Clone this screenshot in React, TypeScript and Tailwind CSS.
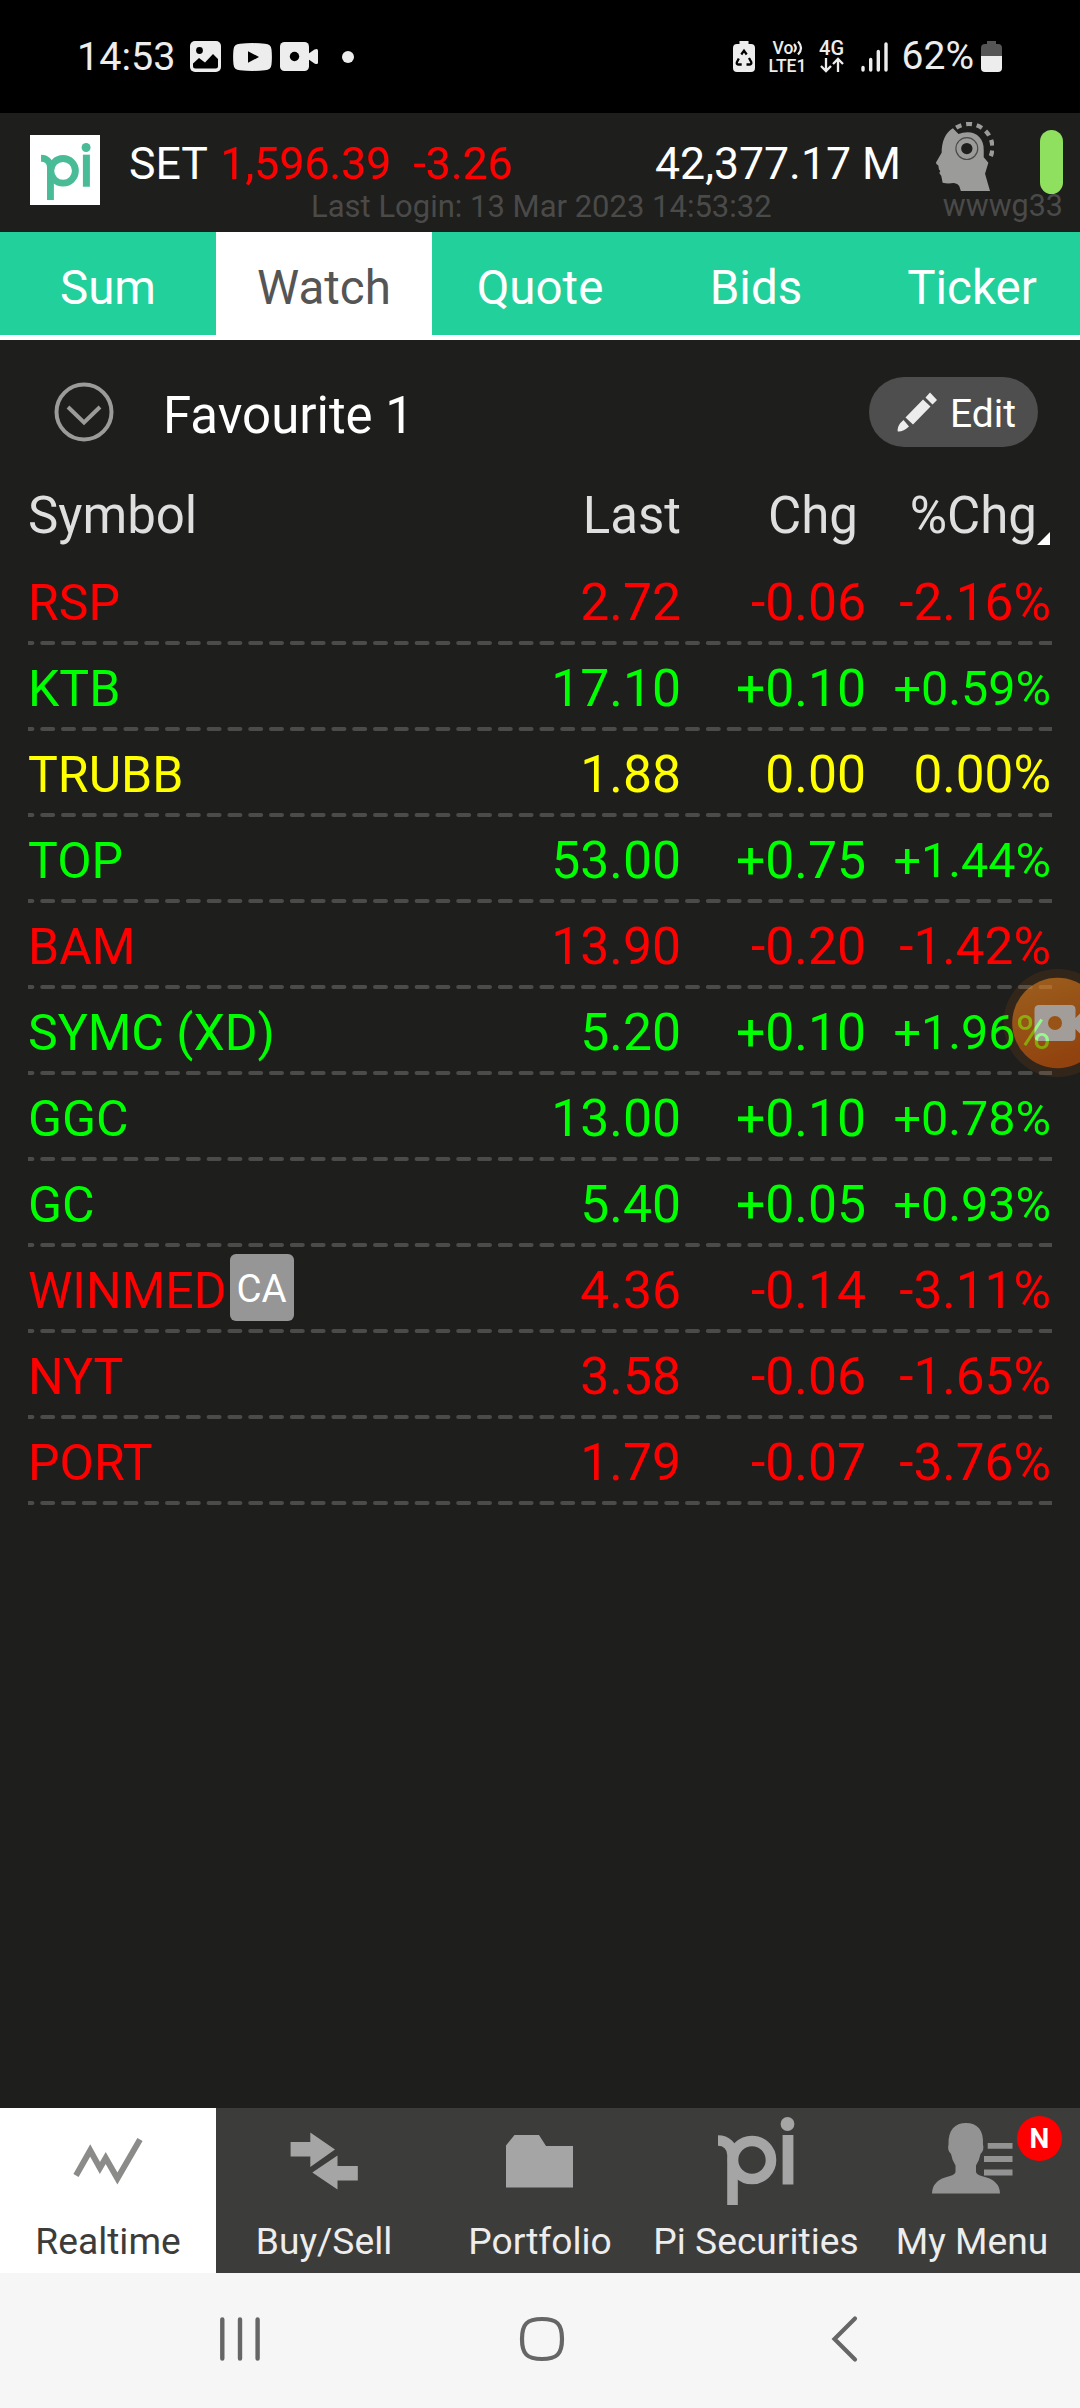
import React from "react";

type Trend = "up" | "down" | "flat";

interface Quote {
  symbol: string;
  last: string;
  chg: string;
  pct: string;
  trend: Trend;
  flag?: string;
}

const quotes: Quote[] = [
  { symbol: "RSP", last: "2.72", chg: "-0.06", pct: "-2.16%", trend: "down" },
  { symbol: "KTB", last: "17.10", chg: "+0.10", pct: "+0.59%", trend: "up" },
  { symbol: "TRUBB", last: "1.88", chg: "0.00", pct: "0.00%", trend: "flat" },
  { symbol: "TOP", last: "53.00", chg: "+0.75", pct: "+1.44%", trend: "up" },
  { symbol: "BAM", last: "13.90", chg: "-0.20", pct: "-1.42%", trend: "down" },
  { symbol: "SYMC (XD)", last: "5.20", chg: "+0.10", pct: "+1.96%", trend: "up" },
  { symbol: "GGC", last: "13.00", chg: "+0.10", pct: "+0.78%", trend: "up" },
  { symbol: "GC", last: "5.40", chg: "+0.05", pct: "+0.93%", trend: "up" },
  { symbol: "WINMED", last: "4.36", chg: "-0.14", pct: "-3.11%", trend: "down", flag: "CA" },
  { symbol: "NYT", last: "3.58", chg: "-0.06", pct: "-1.65%", trend: "down" },
  { symbol: "PORT", last: "1.79", chg: "-0.07", pct: "-3.76%", trend: "down" },
];

const trendColor: Record<Trend, string> = {
  up: "text-[#00ff00]",
  down: "text-[#ff0000]",
  flat: "text-[#ffff00]",
};

const tabs = ["Sum", "Watch", "Quote", "Bids", "Ticker"];

const PiLogo: React.FC<{ className: string }> = ({ className }) => (
  <svg viewBox="0 0 77 88" fill="none" stroke="currentColor" className={className}>
    <circle cx="34" cy="43" r="19" strokeWidth="10.6" />
    <path d="M0 23.5C8 23.5 14.5 29 14.5 38V88" strokeWidth="10.6" />
    <path d="M70 18V67.5" strokeWidth="10.8" />
    <circle cx="69.5" cy="7" r="6.9" fill="currentColor" stroke="none" />
  </svg>
);

const StatusBar: React.FC = () => (
  <div className="h-[113px] bg-black text-[#ededed] flex items-center justify-between pl-[77px] pr-[78px]">
    <div className="flex items-center">
      <span className="text-[39.5px] leading-none w-[113px]">14:53</span>
      {/* Notification icons */}
      <svg viewBox="0 0 31 31" className="w-[31px] h-[31px]">
        <rect width="31" height="31" rx="5" fill="#ededed" />
        <circle cx="9.5" cy="9.5" r="3.4" fill="#000" />
        <path d="M3 22.5L9 17l6 4.500L23 13l5 5v7q0 2.500-2.500 2.500h-20Q3 27.500 3 25z" fill="#000" />
      </svg>
      <svg viewBox="0 0 39 28" className="w-[39px] h-[28px] ml-3">
        <path d="M7 .8Q19.500-.6 32 .8q6 .2 6.500 5.700.8 7.500 0 15-.5 5.500-6.500 5.700-12.500 1.400-25 0-6-.2-6.500-5.700-.8-7.500 0-15Q1 1 7 .8z" fill="#ededed" />
        <path d="M15 8.200v11.600L26 14z" fill="#000" />
      </svg>
      <svg viewBox="0 0 38 29" className="w-[38px] h-[29px] ml-2">
        <rect width="29" height="29" rx="4.500" fill="#ededed" />
        <path d="M28 12l6.500-4.500q3.500-1.500 3.500 1v12q0 2.500-3.500 1L28 17z" fill="#ededed" />
        <circle cx="14.500" cy="14.500" r="4.700" fill="#000" />
      </svg>
      <span className="w-3 h-3 rounded-full bg-[#ededed] ml-6" />
    </div>

    <div className="flex items-center">
      <svg viewBox="0 0 22 31" className="w-[22px] h-[31px]">
        <path d="M6.500 0h9v3H18q4 0 4 4v20q0 4-4 4H4q-4 0-4-4V7q0-4 4-4h2.500z" fill="#ededed" />
        <path d="M8.300 13.500L11 9.700l2.700 3.800M16 17l2.200 4q.8 2.200-1.500 2.500h-3.200M8.700 23.500H5.300Q3 23.200 4 21l1.800-3.500" fill="none" stroke="#000" strokeWidth="2.300" />
      </svg>
      <div className="flex flex-col gap-[2px] ml-[14px] w-[38px] text-[17.5px] leading-[16px] font-medium">
        <span className="flex items-center pl-[4px]">
          Vo
          <svg viewBox="0 0 11 16" className="w-[11px] h-[16px]" fill="none" stroke="currentColor" strokeWidth="2.200">
            <path d="M1 4q3.500 4 0 8M5 1.500q6 6.500 0 13" />
          </svg>
        </span>
        <span>LTE1</span>
      </div>
      <div className="flex flex-col items-center ml-[12px] w-[26px]">
        <span className="text-[20px] leading-[16px] font-medium">4G</span>
        <svg viewBox="0 0 24 16" className="w-[24px] h-[16px] mt-[1px]" fill="none" stroke="currentColor" strokeWidth="2.300">
          <path d="M6 1v13M1 9l5 5 5-5M18 15V2M13 7l5-5 5 5" />
        </svg>
      </div>
      <svg viewBox="0 0 27 30" className="w-[27px] h-[30px] ml-[16px]" fill="none" stroke="currentColor" strokeWidth="3.400" strokeLinecap="round">
        <path d="M2 25.500V28M9.700 17.500V28M17.300 9.500V28M25 2V28" />
      </svg>
      <span className="text-[39px] leading-none ml-[14px]">62%</span>
      <svg viewBox="0 0 21 31" className="w-[21px] h-[31px] ml-[7px]">
        <path d="M6 0h9v3h2q4 0 4 4v9H0V7q0-4 4-4h2z" fill="#555" />
        <path d="M0 15h21v12q0 4-4 4H4q-4 0-4-4z" fill="#ededed" />
      </svg>
    </div>
  </div>
);

const MarketHeader: React.FC = () => (
  <header className="h-[119px] flex pl-[30px]">
    <div className="w-[70px] h-[70px] mt-[22px] bg-white shrink-0 pt-[8px] pl-[11px]">
      <PiLogo className="w-[50px] h-[57px] text-[#49bb97]" />
    </div>
    <div className="flex-1 flex flex-col pl-[29px] pr-[17px]">
      <div className="flex items-start h-[81px] text-[44.6px] leading-none text-white whitespace-pre">
        <span className="mt-[29px] w-[91px]">SET</span>
        <span className="mt-[29px] text-[#ff0000] flex-1">1,596.39  -3.26</span>
        <span className="mt-[29px]">42,377.17 M</span>
        <svg viewBox="0 0 178 212" className="w-[59px] h-[71px] mt-[9px] ml-[34px]">
          <path
            d="M54 18C32 30 20 58 20 92L3 121q-1 5 7 9l2 12 4 5-3 6 6 9 4 20q14 4 34 1 12 2 16 9l5 15h88l-15-52 10-33-14-17V83C148 52 128 30 98 30q-15 0-27 5z"
            fill="#9b9b99"
          />
          <circle cx="96" cy="79" r="33" fill="none" stroke="#4a4a48" strokeWidth="3.500" />
          <circle cx="96" cy="79" r="17" fill="#1e1e1c" />
          <path d="M64 16A71 71 0 0 1 165 109" fill="none" stroke="#9b9b99" strokeWidth="13" strokeDasharray="17.500 14.500" />
        </svg>
        <span className="w-[23px] h-[64px] rounded-full bg-[#8fe05f] mt-[17px] ml-[46px]" />
      </div>
      <div className="flex items-center justify-between h-[25px] pl-[182px] text-[31px] leading-none text-[#4a4a49]">
        <span>Last Login: 13 Mar 2023 14:53:32</span>
        <span className="text-[30.5px]">wwwg33</span>
      </div>
    </div>
  </header>
);

const TabBar: React.FC = () => (
  <nav className="flex h-[108px] bg-[#22d09b] border-b-[5px] border-white text-[47.5px] leading-none">
    {tabs.map((tab) => (
      <div
        key={tab}
        className={`flex-1 flex items-center justify-center pt-[11px] ${
          tab === "Watch" ? "bg-white text-[#555]" : "text-white"
        }`}
      >
        {tab}
      </div>
    ))}
  </nav>
);

const FavouriteRow: React.FC = () => (
  <div className="flex items-center h-[144px] pl-[54px] pr-[42px] text-white">
    <svg viewBox="0 0 60 60" className="w-[60px] h-[60px]" fill="none" stroke="#9b9b99">
      <circle cx="30" cy="30" r="27.500" strokeWidth="4" />
      <path d="M14 25l16 15.500L46 25" strokeWidth="4" />
    </svg>
    <span className="flex-1 ml-[49px] mt-[6px] text-[51px] leading-none">Favourite 1</span>
    <button className="w-[169px] h-[70px] rounded-full bg-[#4e4e4e] flex items-center pl-[28px]">
      <svg viewBox="0 0 40 40" className="w-[40px] h-[40px]" fill="#ededed">
        <path d="M28.500 5.500l4.500-5 7 7.500-4.500 4.500zM26 7.500l7.500 7L16 32.500l-7.500-7zM6.500 28l5.500 6.500Q6 40 .8 39.500-.5 34 6.500 28z" />
      </svg>
      <span className="text-[39px] leading-none ml-[13px] mt-[4px]">Edit</span>
    </button>
  </div>
);

const DashedRule: React.FC = () => (
  <svg viewBox="0 0 1024 6" className="w-full h-[6px]" fill="none">
    <path
      d="M-6.500 3H1024"
      stroke="#4b4b4a"
      strokeWidth="4.200"
      strokeLinecap="round"
      strokeDasharray="10.800 10"
    />
  </svg>
);

const QuoteTable: React.FC = () => (
  <div className="px-[28px]">
    <div className="flex h-[76px] pb-[14px] items-center text-[51px] leading-none text-[#dfdfdf] relative">
      <span className="flex-1">Symbol</span>
      <span className="text-right">Last</span>
      <span className="w-[177px] text-right">Chg</span>
      <span className="w-[179px] text-right mr-[15px]">%Chg</span>
      {/* Sort marker */}
      <svg viewBox="0 0 13 13" className="absolute w-[13px] h-[13px] right-[2px] bottom-[15px]">
        <path d="M13 0v13H0z" fill="#fff" />
      </svg>
    </div>

    {quotes.map((q) => (
      <div key={q.symbol} className={`h-[86px] flex flex-col ${trendColor[q.trend]}`}>
        <div className="flex-1 flex items-center pt-[6px] text-[51.7px] leading-none">
          <span className="text-[50px]">{q.symbol}</span>
          {q.flag && (
            <span className="w-[64px] h-[67px] -my-2 -translate-y-[4px] ml-[3px] rounded-[6px] bg-[#969696] text-white text-[38.5px] flex items-center justify-center pt-[4px]">
              {q.flag}
            </span>
          )}
          <span className="flex-1 text-right">{q.last}</span>
          <span className="w-[185px] text-right">{q.chg}</span>
          <span
            className={`w-[185px] mr-[1px] text-right ${
              q.pct.startsWith("+") ? "text-[48.5px]" : "text-[51.3px]"
            }`}
          >
            {q.pct}
          </span>
        </div>
        <DashedRule />
      </div>
    ))}
  </div>
);

const RecordBubble: React.FC = () => (
  <svg viewBox="0 0 77 108" className="absolute right-0 top-[969px] w-[77px] h-[108px]">
    <defs>
      <linearGradient id="bubble" x1="0" y1="0" x2="0.400" y2="1">
        <stop offset="0" stopColor="#f39021" />
        <stop offset="1" stopColor="#e05a05" />
      </linearGradient>
    </defs>
    <circle cx="54.500" cy="54" r="54" fill="#f07818" opacity="0.100" />
    <g opacity="0.550">
      <circle cx="54.500" cy="54" r="45.300" fill="url(#bubble)" />
      <path
        d="M36 36h32q4.500 0 4.500 4.500v8.500l5-5v21l-5-5v7.500q0 4.500-4.500 4.500H36q-4.500 0-4.500-4.500v-27Q31.500 36 36 36z"
        fill="#fff"
      />
      <circle cx="52" cy="54" r="7" fill="#ec7a14" />
    </g>
  </svg>
);

const RealtimeIcon = () => (
  <svg viewBox="0 0 216 90" className="w-[216px] h-[90px]" fill="none" stroke="#8b8b89" strokeWidth="6">
    <path d="M76 59.500L90.200 34.500 99.900 52 105.700 42 117.400 62.500 140 23.500" />
  </svg>
);

const BuySellIcon = () => (
  <svg viewBox="216 0 216 90" className="w-[216px] h-[90px]" fill="#a5a5a5">
    <path d="M290.600 26H310.300V16.500L335 33.500 310.300 51V40.500H290.600zM357.800 50H337.500V39.500L312.300 56.500 337.500 73.500V64.500H357.800z" />
  </svg>
);

const FolderIcon = () => (
  <svg viewBox="432 0 216 90" className="w-[216px] h-[90px]" fill="#a5a5a5">
    <path d="M506 71.500V29.500L514.500 19H539L546 30H573V71.500z" />
  </svg>
);

const PiIcon = () => (
  <div className="w-[216px] h-[90px] pl-[70px] pt-[1px]">
    <PiLogo className="w-[77px] h-[88px] text-[#a5a5a5]" />
  </div>
);

const MenuIcon = () => (
  <div className="relative">
    <svg viewBox="864 0 216 90" className="w-[216px] h-[90px]" fill="#939393">
      <path d="M932 77.500Q932 64 950 60q5-1.500 5.500-4V49.500Q952 44 951 38q-4-4-2.500-9.500C948 14 955 7 966 7s18 7 17 21.500q1.500 5.500-2.500 9.500-1 6-4.500 11.500V56q.5 2.500 5.500 4Q1000 64 1000 77.500z" />
      <path d="M987.700 27H1012.500V32.700H987.700zM984 40H1012.500V46H984zM984 53.500H1012.500V59.500H984z" />
    </svg>
    <span className="absolute left-[153px] top-0 w-[45px] h-[45px] rounded-full bg-[#ff0000] text-white text-[28px] leading-none font-bold flex items-center justify-center">
      N
    </span>
  </div>
);

const navItems = [
  { label: "Realtime", Icon: RealtimeIcon, active: true },
  { label: "Buy/Sell", Icon: BuySellIcon },
  { label: "Portfolio", Icon: FolderIcon },
  { label: "Pi Securities", Icon: PiIcon },
  { label: "My Menu", Icon: MenuIcon },
];

const BottomNav: React.FC = () => (
  <nav className="flex h-[165px] bg-[#3c3c3a]">
    {navItems.map(({ label, Icon, active }) => (
      <div
        key={label}
        className={`w-[216px] pt-[8px] flex flex-col items-center ${
          active ? "bg-white text-[#3c3c3a]" : "text-[#ededed]"
        }`}
      >
        <Icon />
        <span className="mt-[17px] text-[37.2px] leading-none whitespace-nowrap">{label}</span>
      </div>
    ))}
  </nav>
);

const SystemNav: React.FC = () => (
  <div className="flex items-center h-[135px] bg-[#f6f6f6] pl-[219px] pb-[3px]">
    <svg viewBox="0 0 42 46" className="w-[42px] h-[46px]" fill="none" stroke="#666" strokeWidth="4.400" strokeLinecap="round">
      <path d="M3.300 3.500v39M21 3.500v39M38.600 3.500v39" />
    </svg>
    <svg viewBox="0 0 46 46" className="w-[46px] h-[46px] ml-[258px]" fill="none" stroke="#666" strokeWidth="4.200">
      <path d="M23 3C38 3 43 8 43 23S38 43 23 43 3 38 3 23 8 3 23 3z" />
    </svg>
    <svg viewBox="0 0 28 48" className="w-[28px] h-[48px] ml-[265px]" fill="none" stroke="#666" strokeWidth="4.200" strokeLinecap="round">
      <path d="M25 3.500L4.500 24 25 44.500" />
    </svg>
  </div>
);

export default function App() {
  return (
    <div className="relative w-[1080px] h-[2408px] flex flex-col overflow-hidden bg-[#1e1e1c] font-['Roboto',sans-serif]">
      <StatusBar />
      <MarketHeader />
      <TabBar />
      <main className="flex-1">
        <FavouriteRow />
        <QuoteTable />
      </main>
      <BottomNav />
      <SystemNav />
      <RecordBubble />
    </div>
  );
}
